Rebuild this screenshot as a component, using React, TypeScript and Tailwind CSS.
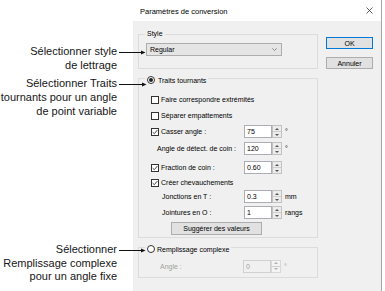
import React from 'react';

// Annotated "Paramètres de conversion" dialog: callout captions on the left,
// a Windows-style dialog on the right, arrows drawn over both.

function Check({ checked }: { checked?: boolean }) {
  return (
    <span className="w-[8px] h-[8px] border border-[#333] bg-white flex items-center justify-center shrink-0">
      {checked && (
        <svg width="6" height="6" viewBox="0 0 6 6">
          <path d="M0.6 3.1 L2.3 4.7 L5.4 1" fill="none" stroke="#333" strokeWidth="0.9" />
        </svg>
      )}
    </span>
  );
}

function Radio({ on }: { on?: boolean }) {
  return (
    <span className="w-[8px] h-[8px] rounded-full border border-[#333] bg-white flex items-center justify-center shrink-0">
      {on && <span className="w-[4px] h-[4px] rounded-full bg-[#222]" />}
    </span>
  );
}

function Spin({ value, unit, disabled }: { value: string; unit?: string; disabled?: boolean }) {
  const arrow = disabled ? '#b0b0b0' : '#555';
  return (
    <div className="flex items-center">
      <div
        className={
          'h-[13px] w-[28px] border flex items-center pl-[2px] ' +
          (disabled ? 'border-[#d0d0d0] bg-[#f0f0f0] text-[#a0a0a0]' : 'border-[#abadb3] bg-white text-black')
        }
      >
        {value}
      </div>
      <div
        className={
          'h-[13px] w-[10px] border flex flex-col ' +
          (disabled ? 'border-[#d8d8d8] bg-[#f4f4f4]' : 'border-[#c2c2c2] bg-[#ececec]')
        }
      >
        <span className="flex-1 flex items-center justify-center border-b border-[#cfcfcf]">
          <svg width="4" height="2" viewBox="0 0 4 2"><path d="M0 2 L2 0 L4 2 Z" fill={arrow} /></svg>
        </span>
        <span className="flex-1 flex items-center justify-center">
          <svg width="4" height="2" viewBox="0 0 4 2"><path d="M0 0 L2 2 L4 0 Z" fill={arrow} /></svg>
        </span>
      </div>
      {unit && <span className={'ml-[3px] ' + (disabled ? 'text-[#a0a0a0]' : '')}>{unit}</span>}
    </div>
  );
}

function CheckRow({ label, checked, className }: { label: string; checked?: boolean; className?: string }) {
  return (
    <div className={'h-[13px] flex items-center gap-[2px] ' + (className ?? '')}>
      <Check checked={checked} />
      <span>{label}</span>
    </div>
  );
}

export default function App() {
  return (
    <div className="relative w-[385px] h-[291px] bg-white flex overflow-hidden font-['Liberation_Sans',Arial,sans-serif]">
      {/* callout captions */}
      <div className="w-[133px] shrink-0 pr-[16px] text-right text-[11px] leading-[14px] whitespace-nowrap text-[#161616]">
        <div className="mt-[44px]">
          Sélectionner style
          <br />
          de lettrage
        </div>
        <div className="mt-[4px]">
          Sélectionner Traits
          <br />
          tournants pour un angle
          <br />
          de point variable
        </div>
        <div className="mt-[125px] leading-[13.5px]">
          Sélectionner
          <br />
          Remplissage complexe
          <br />
          pour un angle fixe
        </div>
      </div>

      {/* dialog */}
      <div className="w-[249px] shrink-0 flex flex-col border-r border-[#a6a6a6] text-[7px] leading-[9px] text-black">
        <div className="h-[21px] bg-white flex items-center justify-between pl-[7px] pr-[8px] pt-[2px]">
          <span className="text-[7.5px]">Paramètres de conversion</span>
          <svg width="7" height="7" viewBox="0 0 7 7" className="-mt-[3px]">
            <path d="M0.5 0.5 L6.5 6.5 M6.5 0.5 L0.5 6.5" stroke="#333" strokeWidth="0.8" />
          </svg>
        </div>

        <div className="flex-1 bg-[#f0f0f0] flex pl-[5px]">
          <div className="w-[180px] shrink-0 flex flex-col">
            {/* Style */}
            <div className="mt-[13px] h-[35px] border border-[#dcdcdc] flex flex-col">
              <div className="-mt-[6px] ml-[6px] px-[2px] w-fit bg-[#f0f0f0] h-[9px]">Style</div>
              <div className="mt-[5px] ml-[7px] w-[136px] h-[13px] border border-[#adadad] bg-[#e5e5e5] flex items-center justify-between pl-[3px] pr-[4px]">
                <span>Regular</span>
                <svg width="5" height="3" viewBox="0 0 5 3">
                  <path d="M0.3 0.3 L2.5 2.5 L4.7 0.3" fill="none" stroke="#666" strokeWidth="0.7" />
                </svg>
              </div>
            </div>

            {/* Traits tournants */}
            <div className="mt-[9px] border border-[#dcdcdc] flex flex-col pb-[2px]">
              <div className="-mt-[4px] ml-[6px] px-[2px] w-fit bg-[#f0f0f0] h-[10px] flex items-center gap-[3px]">
                <Radio on />
                <span>Traits tournants</span>
              </div>
              <div className="pl-[12px] flex flex-col">
                <CheckRow className="mt-[8px]" label="Faire correspondre extrémités" />
                <CheckRow className="mt-[3px]" label="Séparer empattements" />
                <div className="mt-[3px] h-[13px] flex items-center">
                  <div className="w-[93px] flex items-center gap-[2px]">
                    <Check checked />
                    <span>Casser angle :</span>
                  </div>
                  <Spin value="75" unit="°" />
                </div>
                <div className="mt-[4px] h-[13px] flex items-center">
                  <div className="w-[93px] pl-[6px]">Angle de détect. de coin :</div>
                  <Spin value="120" unit="°" />
                </div>
                <div className="mt-[6px] h-[13px] flex items-center">
                  <div className="w-[93px] flex items-center gap-[2px]">
                    <Check checked />
                    <span>Fraction de coin :</span>
                  </div>
                  <Spin value="0.60" />
                </div>
                <CheckRow className="mt-[2px]" checked label="Créer chevauchements" />
                <div className="mt-[1px] h-[13px] flex items-center">
                  <div className="w-[93px] pl-[11px]">Jonctions en T :</div>
                  <Spin value="0.3" unit="mm" />
                </div>
                <div className="mt-[3px] h-[13px] flex items-center">
                  <div className="w-[93px] pl-[11px]">Jointures en O :</div>
                  <Spin value="1" unit="rangs" />
                </div>
                <div className="mt-[3px] ml-[20px] w-[91px] h-[13px] border border-[#adadad] bg-[#e1e1e1] flex items-center justify-center">
                  Suggérer des valeurs
                </div>
              </div>
            </div>

            {/* Remplissage complexe */}
            <div className="mt-[9px] border border-[#dcdcdc] flex flex-col pb-[5px]">
              <div className="-mt-[4px] ml-[6px] px-[2px] w-fit bg-[#f0f0f0] h-[10px] flex items-center gap-[2px]">
                <Radio />
                <span>Remplissage complexe</span>
              </div>
              <div className="mt-[6px] pl-[12px] h-[12px] flex items-center">
                <div className="w-[92px] pl-[9px] text-[#a0a0a0]">Angle :</div>
                <Spin value="0" unit="°" disabled />
              </div>
            </div>
          </div>

          {/* buttons */}
          <div className="ml-[8px] w-[47px] flex flex-col">
            <div className="mt-[16px] h-[12px] border border-[#0078d7] bg-[#e1e1e1] flex items-center justify-center">
              OK
            </div>
            <div className="mt-[8px] h-[12px] border border-[#adadad] bg-[#e1e1e1] flex items-center justify-center">
              Annuler
            </div>
          </div>
        </div>
      </div>

      {/* callout arrows */}
      <svg className="absolute inset-0 pointer-events-none" width="385" height="291" viewBox="0 0 385 291">
        <g stroke="#111" strokeWidth="1" shapeRendering="crispEdges">
          <line x1="119" y1="52.5" x2="142" y2="52.5" />
          <line x1="119" y1="84.5" x2="143" y2="84.5" />
          <line x1="119" y1="250.5" x2="142" y2="250.5" />
        </g>
        <g fill="#111">
          <polygon points="141,50.5 145.5,52.5 141,54.5" />
          <polygon points="142,82.5 146.5,84.5 142,86.5" />
          <polygon points="141,248.5 145.5,250.5 141,252.5" />
        </g>
      </svg>
    </div>
  );
}
